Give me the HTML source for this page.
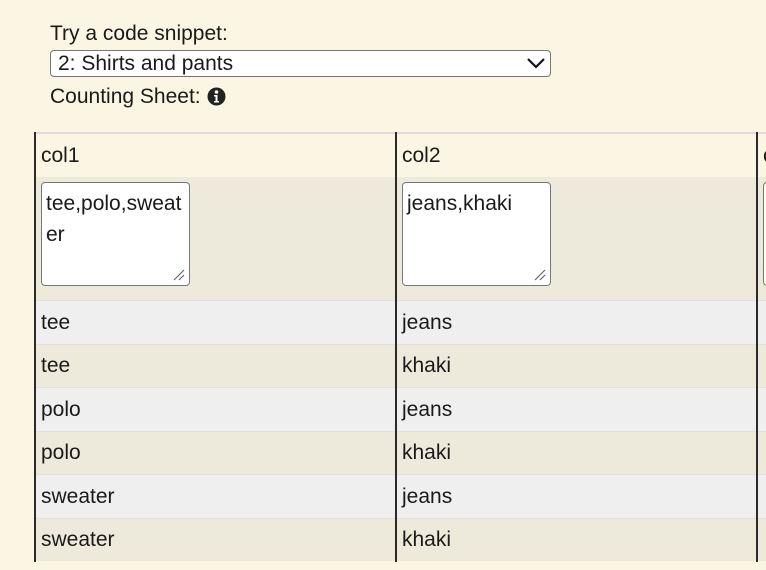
<!DOCTYPE html>
<html><head><style>
body{margin:0;width:766px;height:570px;overflow:hidden;background:#fbf6e3;font-family:"Liberation Sans",sans-serif;color:#1a1a1a;position:relative}
.a{position:absolute}
.t{font-size:21px;line-height:24px}
.sel{left:50px;top:50px;width:501px;height:27px;background:#fff;border:1px solid #777;border-radius:4px;box-sizing:border-box}
.row{position:absolute;left:36px;width:730px}
.cell{position:absolute;font-size:21px;line-height:24px}
.vl{position:absolute;top:132px;height:430px;width:2px;background:#2a2a2a}
.ta{position:absolute;background:#fff;border:1px solid #777;border-radius:4px;box-sizing:border-box;font-size:21px;line-height:31px;padding:5px 4px;width:149px;height:104px;top:182px;word-break:break-all}
</style></head><body>
<div class="a t" style="left:50px;top:22px">Try a code snippet:</div>
<div class="a sel"></div>
<div class="a t" style="left:58px;top:52px">2: Shirts and pants</div>
<svg class="a" style="left:526px;top:56px" width="20" height="14"><path d="M2 3 L10 11 L18 3" stroke="#111" stroke-width="2.2" fill="none"/></svg>
<div class="a t" style="left:50px;top:85px">Counting Sheet:</div>
<svg class="a" style="left:207px;top:87px" width="19" height="19"><circle cx="9.5" cy="9.5" r="9" fill="#222"/><circle cx="9.5" cy="5" r="1.8" fill="#fff"/><path d="M7 8h3.5v6h1.5v1.5h-5v-1.5h1.5v-4.5h-1.5z" fill="#fff"/></svg>

<div class="row" style="top:132px;height:45px;background:#fbf6e3;border-top:2px solid #ddd;box-sizing:border-box"></div>
<div class="row" style="top:177px;height:123px;background:#eeeadb"></div>
<div class="row" style="top:300px;height:44px;background:#efefef;border-top:1px solid #e0e0e0;box-sizing:border-box"></div>
<div class="row" style="top:344px;height:43px;background:#eeeadb;border-top:1px solid #e0e0e0;box-sizing:border-box"></div>
<div class="row" style="top:387px;height:44px;background:#efefef;border-top:1px solid #e0e0e0;box-sizing:border-box"></div>
<div class="row" style="top:431px;height:43px;background:#eeeadb;border-top:1px solid #e0e0e0;box-sizing:border-box"></div>
<div class="row" style="top:474px;height:44px;background:#efefef;border-top:1px solid #e0e0e0;box-sizing:border-box"></div>
<div class="row" style="top:518px;height:43px;background:#eeeadb;border-top:1px solid #e0e0e0;box-sizing:border-box"></div>

<div class="vl" style="left:34px"></div>
<div class="vl" style="left:395px"></div>
<div class="vl" style="left:756px"></div>

<div class="cell" style="left:41px;top:144px">col1</div>
<div class="cell" style="left:402px;top:144px">col2</div>
<div class="cell" style="left:763px;top:144px">c</div>
<div class="ta" style="left:41px">tee,polo,sweater</div>
<div class="ta" style="left:402px">jeans,khaki</div>
<div class="ta" style="left:763px"></div>
<svg class="a" style="left:172px;top:268px" width="14" height="14"><path d="M2 12L12 2M7 12L12 7" stroke="#666" stroke-width="1.2"/></svg>
<svg class="a" style="left:533px;top:268px" width="14" height="14"><path d="M2 12L12 2M7 12L12 7" stroke="#666" stroke-width="1.2"/></svg>

<div class="cell" style="left:41px;top:311px">tee</div><div class="cell" style="left:402px;top:311px">jeans</div>
<div class="cell" style="left:41px;top:354px">tee</div><div class="cell" style="left:402px;top:354px">khaki</div>
<div class="cell" style="left:41px;top:398px">polo</div><div class="cell" style="left:402px;top:398px">jeans</div>
<div class="cell" style="left:41px;top:441px">polo</div><div class="cell" style="left:402px;top:441px">khaki</div>
<div class="cell" style="left:41px;top:485px">sweater</div><div class="cell" style="left:402px;top:485px">jeans</div>
<div class="cell" style="left:41px;top:528px">sweater</div><div class="cell" style="left:402px;top:528px">khaki</div>
</body></html>
